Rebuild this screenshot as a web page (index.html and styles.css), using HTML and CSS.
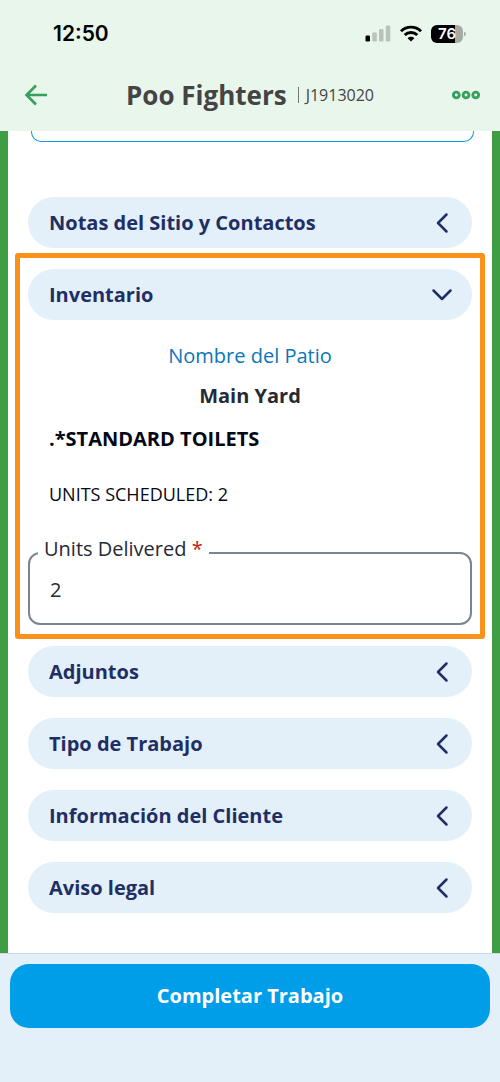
FILE: index.html
```html
<!DOCTYPE html>
<html lang="es">
<head>
<meta charset="utf-8">
<meta name="viewport" content="width=device-width, initial-scale=1">
<title>Poo Fighters</title>
<link rel="stylesheet" href="styles.css">
</head>
<body>
<header class="header">
  <div class="status">
    <span class="status-time">12:50</span>
    <div class="status-icons">
      <svg width="26" height="17" viewBox="0 0 26 17" aria-hidden="true">
        <rect x="0.5" y="10.5" width="4.500" height="6" rx="1.2" fill="#000"/>
        <g fill="#b8c4ba"><rect x="7.3" y="7.5" width="4.5" height="9" rx="1.2"/><rect x="14" y="4" width="4.5" height="12.5" rx="1.2"/><rect x="20.8" y="0.5" width="4.5" height="16" rx="1.2"/></g>
      </svg>
      <svg width="22" height="17" viewBox="0 0 22 17" aria-hidden="true">
        <g fill="none" stroke="#000" stroke-width="2.9"><path d="M1 6.2a14.3 14.3 0 0 1 20 0"/><path d="M4.7 10a9 9 0 0 1 12.6 0"/></g>
        <path d="M11 16.6 7.6 13.2a4.8 4.8 0 0 1 6.8 0z" fill="#000"/>
      </svg>
      <div class="battery"><span class="battery-level">76</span></div>
    </div>
  </div>
  <div class="toolbar">
    <button class="icon-button" type="button" aria-label="Volver">
      <svg width="24" height="24" viewBox="0 0 24 24" aria-hidden="true"><path d="M23 12H2.500M12 2.500 2.500 12l9.500 9.500" fill="none" stroke="#38a05d" stroke-width="2.600"/></svg>
    </button>
    <div class="heading"><h1 class="title">Poo Fighters</h1><span class="divider"></span><span class="job">J1913020</span></div>
    <button class="icon-button" type="button" aria-label="Opciones">
      <svg width="28" height="10" viewBox="0 0 28 10" aria-hidden="true"><g fill="none" stroke="#38a05d" stroke-width="2.900"><circle cx="4.300" cy="5" r="2.900"/><circle cx="14" cy="5" r="2.900"/><circle cx="23.700" cy="5" r="2.900"/></g></svg>
    </button>
  </div>
</header>
<main class="content">
  <div class="card-end"></div>
  <div class="sections">
    <button class="pill" type="button">Notas del Sitio y Contactos
      <svg class="chevron" viewBox="0 0 24 24" aria-hidden="true"><path d="M16.500 3.500 8 12l8.500 8.500"/></svg></button>
    <section class="inventory">
      <button class="pill" type="button" aria-expanded="true">Inventario
        <svg class="chevron" viewBox="0 0 24 24" aria-hidden="true"><path d="M3.500 7.500 12 16l8.500-8.500"/></svg></button>
      <p class="yard-label">Nombre del Patio</p>
      <p class="yard-name">Main Yard</p>
      <h2 class="item">.*STANDARD TOILETS</h2>
      <p class="scheduled">UNITS SCHEDULED: 2</p>
      <fieldset class="field">
        <legend class="legend"><label for="units">Units Delivered <span class="required">*</span></label></legend>
        <input class="input" id="units" type="text" inputmode="numeric" value="2" required>
      </fieldset>
    </section>
    <button class="pill" type="button">Adjuntos
      <svg class="chevron" viewBox="0 0 24 24" aria-hidden="true"><path d="M16.500 3.500 8 12l8.500 8.500"/></svg></button>
    <button class="pill" type="button">Tipo de Trabajo
      <svg class="chevron" viewBox="0 0 24 24" aria-hidden="true"><path d="M16.500 3.500 8 12l8.500 8.500"/></svg></button>
    <button class="pill" type="button">Información del Cliente
      <svg class="chevron" viewBox="0 0 24 24" aria-hidden="true"><path d="M16.500 3.500 8 12l8.500 8.500"/></svg></button>
    <button class="pill" type="button">Aviso legal
      <svg class="chevron" viewBox="0 0 24 24" aria-hidden="true"><path d="M16.500 3.500 8 12l8.500 8.500"/></svg></button>
  </div>
</main>
<footer class="footer">
  <button class="complete" type="button">Completar Trabajo</button>
</footer>
</body>
</html>
```
FILE: styles.css
```css
* { box-sizing: border-box; }
body {
  margin: 0;
  min-height: 100vh;
  display: flex;
  flex-direction: column;
  font-family: "Open Sans", sans-serif;
  font-size: 20px;
  line-height: 28px;
  color: #252a34;
  background: #e3f0f9;
}
button { border: 0; font: inherit; cursor: pointer; }
h1, h2, p { margin: 0; }
svg { display: block; }

.header { background: #e9f6eb; padding-bottom: 12px; }
.status {
  display: flex;
  align-items: center;
  justify-content: space-between;
  height: 59px;
  padding: 8px 34px 0 53px;
}
.status-time { font: 600 21px/28px Inter, sans-serif; color: #000; }
.status-icons { display: flex; align-items: center; gap: 9px; }
.battery {
  position: relative;
  width: 32px;
  height: 18px;
  margin-right: 3px;
  border-radius: 6px;
  background: linear-gradient(to right, #000 76%, #a4aca5 76%);
}
.battery::after {
  content: "";
  position: absolute;
  left: 33px;
  top: 7px;
  width: 2px;
  height: 4px;
  border-radius: 0 2px 2px 0;
  background: #a4aca5;
}
.battery-level { display: block; text-align: center; font: 600 15px/18px Inter, sans-serif; color: #fff; }
.toolbar {
  display: flex;
  align-items: center;
  justify-content: space-between;
  height: 60px;
  padding: 12px 20px 0 24px;
}
.icon-button { padding: 0; background: none; }
.heading { display: flex; align-items: center; }
.title { font-size: 26px; line-height: 36px; font-weight: 700; color: #444; }
.divider { width: 1px; height: 16px; margin: 0 7px 0 11px; background: #777; }
.job { font-size: 16px; color: #444; }

.content {
  flex: 1;
  padding: 0 20px 40px;
  border: solid #3f9d44;
  border-width: 0 8px;
  background: #fff;
}
.card-end {
  height: 11px;
  margin: 0 -2px 0 3px;
  border: 1px solid #0d9ce0;
  border-top: 0;
  border-radius: 0 0 10px 10px;
}
.sections { display: flex; flex-direction: column; gap: 21px; padding-top: 55px; }
.pill {
  display: flex;
  align-items: center;
  justify-content: space-between;
  width: 100%;
  height: 51px;
  padding: 0 18px 0 21px;
  border-radius: 26px;
  background: #e3f0f9;
  color: #1f2f66;
  font-weight: 700;
  text-align: left;
}
.chevron {
  width: 24px;
  height: 24px;
  fill: none;
  stroke: #1f2f66;
  stroke-width: 2.5;
  stroke-linecap: round;
  stroke-linejoin: round;
}

.inventory { position: relative; }
.inventory::after {
  content: "";
  position: absolute;
  inset: -16px -13px -14px;
  border: 5px solid #fa9219;
  border-radius: 3px;
  pointer-events: none;
}
.yard-label { margin-top: 22px; text-align: center; color: #0b76b8; }
.yard-name { margin-top: 12px; text-align: center; font-weight: 700; }
.item { margin: 15px 21px 0; font-size: 20px; line-height: 28px; font-weight: 700; color: #050814; }
.scheduled { margin: 27px 21px 0; font-size: 18px; color: #050814; }
.field {
  min-width: 0;
  margin: 27px 0 0;
  padding: 0 8px;
  border: 2px solid #7b8590;
  border-radius: 12px;
}
.legend { padding: 0 6px 8px; }
.required { color: #c01818; }
.input {
  display: block;
  width: 100%;
  height: 52px;
  padding: 0 12px 16px;
  border: 0;
  outline: 0;
  background: transparent;
  font: inherit;
  color: inherit;
}

.footer { height: 129px; padding: 10px; border-top: 1px solid #cad9e2; background: #e3f0f9; }
.complete {
  width: 100%;
  height: 64px;
  border-radius: 19px;
  background: #009de8;
  color: #fff;
  font-weight: 700;
}
```
